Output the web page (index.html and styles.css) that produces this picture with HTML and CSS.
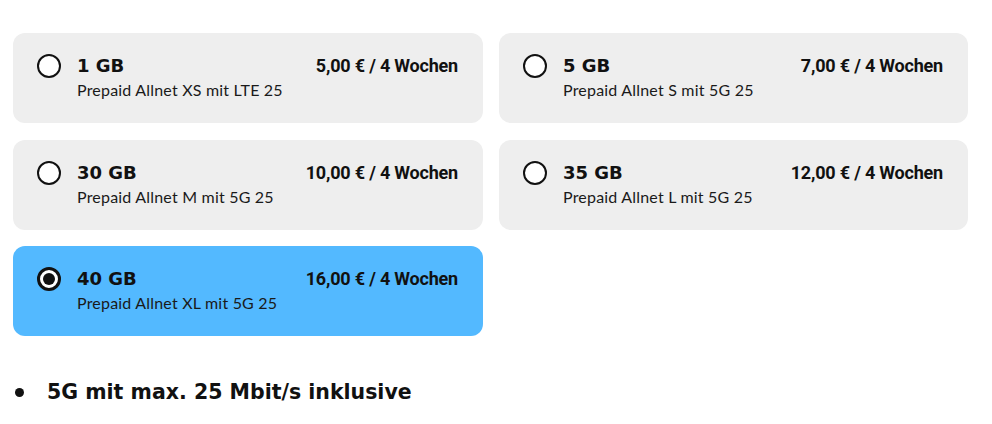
FILE: index.html
```html
<!DOCTYPE html>
<html lang="de">
<head>
<meta charset="utf-8">
<title>Tarife</title>
<link rel="stylesheet" href="styles.css">
</head>
<body>
<div class="page">
  <div class="grid">
    <label class="card">
      <span class="radio"></span>
      <span class="info">
        <span class="title">1 GB</span>
        <span class="sub">Prepaid Allnet XS mit LTE 25</span>
      </span>
      <span class="price">5,00 € / 4 Wochen</span>
    </label>
    <label class="card">
      <span class="radio"></span>
      <span class="info">
        <span class="title">5 GB</span>
        <span class="sub">Prepaid Allnet S mit 5G 25</span>
      </span>
      <span class="price">7,00 € / 4 Wochen</span>
    </label>
    <label class="card">
      <span class="radio"></span>
      <span class="info">
        <span class="title">30 GB</span>
        <span class="sub">Prepaid Allnet M mit 5G 25</span>
      </span>
      <span class="price">10,00 € / 4 Wochen</span>
    </label>
    <label class="card">
      <span class="radio"></span>
      <span class="info">
        <span class="title">35 GB</span>
        <span class="sub">Prepaid Allnet L mit 5G 25</span>
      </span>
      <span class="price">12,00 € / 4 Wochen</span>
    </label>
    <label class="card selected">
      <span class="radio checked"></span>
      <span class="info">
        <span class="title">40 GB</span>
        <span class="sub">Prepaid Allnet XL mit 5G 25</span>
      </span>
      <span class="price">16,00 € / 4 Wochen</span>
    </label>
  </div>
  <ul class="features">
    <li>5G mit max. 25 Mbit/s inklusive</li>
  </ul>
</div>
</body>
</html>
```

FILE: styles.css
```css
* { box-sizing: border-box; }
html, body { margin: 0; padding: 0; background: #fff; }
body {
  font-family: Lato, "Noto Sans", sans-serif;
  color: #111;
}
.page {
  padding: 33px 24px 0 13px;
}
.grid {
  display: grid;
  grid-template-columns: 470px 469px;
  column-gap: 16px;
  row-gap: 16.5px;
}
.card {
  height: 90px;
  background: #eeeeee;
  border-radius: 12px;
  display: flex;
  align-items: flex-start;
  padding: 22px 25px 0 24px;
}
.card.selected { background: #53b9ff; }
.radio {
  width: 24px;
  height: 24px;
  border: 2px solid #111;
  border-radius: 50%;
  background: #fff;
  flex: none;
  margin-top: -1px;
  position: relative;
}
.radio.checked { border-width: 3px; }
.radio.checked::after {
  content: "";
  position: absolute;
  left: 3px; top: 3px;
  width: 12px; height: 12px;
  border-radius: 50%;
  background: #111;
}
.info {
  display: flex;
  flex-direction: column;
  margin-left: 16px;
  flex: 1;
  white-space: nowrap;
}
.title {
  font-family: "DejaVu Sans", sans-serif;
  font-weight: 700;
  font-size: 18px;
  line-height: 22px;
}
.sub {
  font-size: 16px;
  line-height: 20px;
  letter-spacing: 0.2px;
  margin-top: 3px;
  color: #1a1a1a;
}
.price {
  font-family: Roboto, "Noto Sans", sans-serif;
  font-weight: 700;
  font-size: 18px;
  letter-spacing: -0.2px;
  line-height: 22px;
  white-space: nowrap;
}
.features {
  list-style: none;
  margin: 41px 0 0 0;
  padding: 0;
}
.features li {
  display: flex;
  align-items: center;
  font-family: "DejaVu Sans", sans-serif;
  font-size: 20.5px;
  font-weight: 700;
  line-height: 30px;
}
.features li::before {
  content: "";
  width: 9px; height: 9px;
  border-radius: 50%;
  background: #111;
  margin-right: 23px;
  margin-left: 2px;
  flex: none;
}
```
